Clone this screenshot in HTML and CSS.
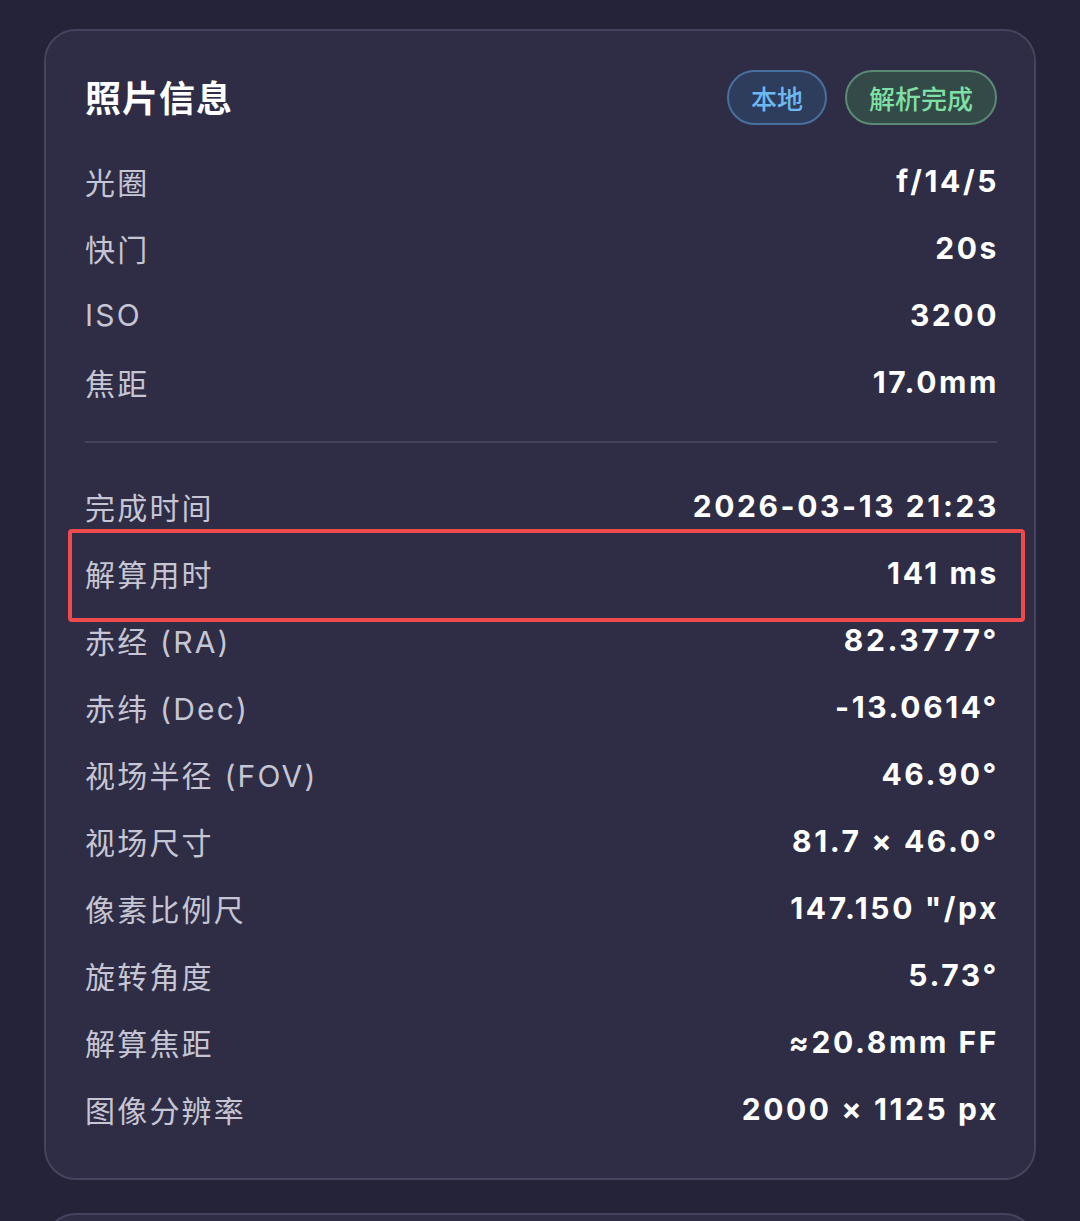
FILE: index.html
```html
<!DOCTYPE html>
<html lang="zh">
<head>
<meta charset="utf-8">
<link rel="stylesheet" href="styles.css">
</head>
<body>
<div class="page">
  <section class="card">
    <header class="card-head">
      <h2 class="title">照片信息</h2>
      <div class="badges">
        <span class="badge badge-blue">本地</span>
        <span class="badge badge-green">解析完成</span>
      </div>
    </header>
    <div class="rows">
      <div class="row"><span class="label">光圈</span><span class="value">f/14/5</span></div>
      <div class="row"><span class="label">快门</span><span class="value">20s</span></div>
      <div class="row"><span class="label">ISO</span><span class="value">3200</span></div>
      <div class="row"><span class="label">焦距</span><span class="value">17.0mm</span></div>
    </div>
    <hr class="divider">
    <div class="rows">
      <div class="row"><span class="label">完成时间</span><span class="value">2026-03-13 21:23</span></div>
      <div class="row row-marked"><span class="label">解算用时</span><span class="value">141 ms</span><span class="mark"></span></div>
      <div class="row"><span class="label">赤经 (RA)</span><span class="value">82.3777°</span></div>
      <div class="row"><span class="label">赤纬 (Dec)</span><span class="value">-13.0614°</span></div>
      <div class="row"><span class="label">视场半径 (FOV)</span><span class="value">46.90°</span></div>
      <div class="row"><span class="label">视场尺寸</span><span class="value">81.7 × 46.0°</span></div>
      <div class="row"><span class="label">像素比例尺</span><span class="value">147.150 "/px</span></div>
      <div class="row"><span class="label">旋转角度</span><span class="value">5.73°</span></div>
      <div class="row"><span class="label">解算焦距</span><span class="value">≈20.8mm FF</span></div>
      <div class="row"><span class="label">图像分辨率</span><span class="value">2000 × 1125 px</span></div>
    </div>
  </section>
  <section class="card card-next"></section>
</div>
</body>
</html>
```

FILE: styles.css
```css
html, body {
  margin: 0;
  padding: 0;
}
body {
  background: #25233a;
  font-family: "Inter", "Noto Sans CJK SC", sans-serif;
  color: #ffffff;
}
.page {
  height: 1221px;
  box-sizing: border-box;
  overflow: hidden;
  padding: 29px 44px 0 44px;
  display: flex;
  flex-direction: column;
  gap: 33px;
}
.card {
  flex: none;
  background: #2e2d45;
  border: 2px solid #45435d;
  border-radius: 32px;
  padding: 38px 37px 36px 39px;
}
.card-next {
  height: 60px;
  padding: 0;
}
.card-head {
  display: flex;
  align-items: center;
  justify-content: space-between;
  height: 56px;
  margin-bottom: 22px;
}
.title {
  margin: 0;
  margin-top: -3px;
  font-size: 36px;
  font-weight: 700;
  letter-spacing: 1px;
  color: #ffffff;
}
.badges {
  display: flex;
  gap: 18px;
}
.badge {
  display: inline-flex;
  align-items: center;
  height: 55px;
  box-sizing: border-box;
  padding: 0 22px;
  border-radius: 28px;
  font-size: 26px;
  font-weight: 500;
  border: 2px solid;
}
.badge-blue {
  color: #6cb9f2;
  background: #2f3d5c;
  border-color: #47709e;
}
.badge-green {
  color: #7ee0a4;
  background: #344a48;
  border-color: #5b8a74;
}
.rows {
  display: flex;
  flex-direction: column;
}
.row {
  display: flex;
  align-items: center;
  justify-content: space-between;
  height: 67px;
}
.label {
  font-size: 30px;
  color: #c6c5d3;
  letter-spacing: 2.2px;
}
.value {
  font-size: 30px;
  font-weight: 700;
  color: #ffffff;
  letter-spacing: 2.6px;
  margin-right: -2px;
}
.divider {
  border: 0;
  height: 2px;
  background: #44435b;
  margin: 26px 0 29px 0;
}
.row-marked {
  position: relative;
}
.mark {
  position: absolute;
  left: -17px;
  right: -28px;
  top: -10px;
  bottom: -16px;
  border: 4px solid #ef4b4c;
  border-radius: 4px;
  pointer-events: none;
}
```
